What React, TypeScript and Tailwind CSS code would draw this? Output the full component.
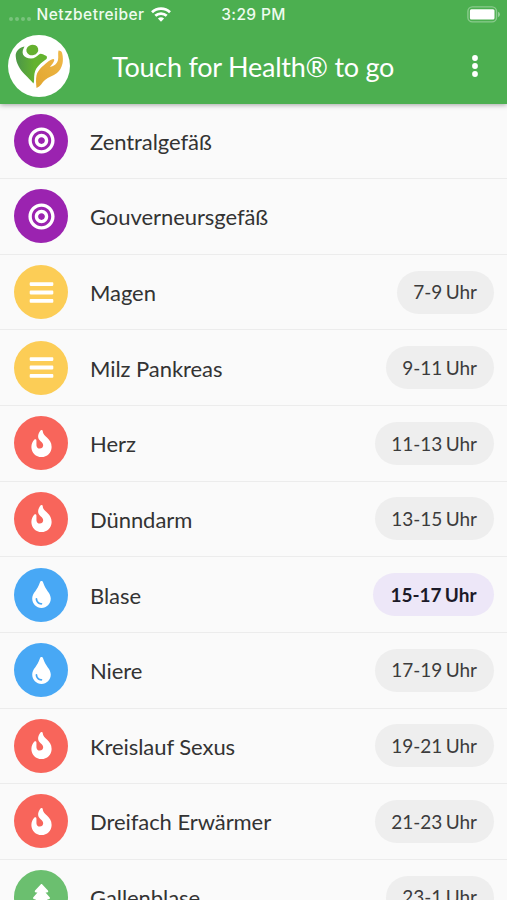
import type { IconType } from "react-icons";
import { FaBars, FaBullseye, FaFire, FaTint, FaTree } from "react-icons/fa";

type Meridian = {
    name: string;
    time?: string;
    icon: IconType;
    color: string;
    active?: boolean;
};

const meridians: Meridian[] = [
    { name: "Zentralgefäß", icon: FaBullseye, color: "bg-[#9b23b0]" },
    { name: "Gouverneursgefäß", icon: FaBullseye, color: "bg-[#9b23b0]" },
    { name: "Magen", time: "7-9 Uhr", icon: FaBars, color: "bg-[#fccd56]" },
    { name: "Milz Pankreas", time: "9-11 Uhr", icon: FaBars, color: "bg-[#fccd56]" },
    { name: "Herz", time: "11-13 Uhr", icon: FaFire, color: "bg-[#f8655b]" },
    { name: "Dünndarm", time: "13-15 Uhr", icon: FaFire, color: "bg-[#f8655b]" },
    { name: "Blase", time: "15-17 Uhr", icon: FaTint, color: "bg-[#48a8f5]", active: true },
    { name: "Niere", time: "17-19 Uhr", icon: FaTint, color: "bg-[#48a8f5]" },
    { name: "Kreislauf Sexus", time: "19-21 Uhr", icon: FaFire, color: "bg-[#f8655b]" },
    { name: "Dreifach Erwärmer", time: "21-23 Uhr", icon: FaFire, color: "bg-[#f8655b]" },
    { name: "Gallenblase", time: "23-1 Uhr", icon: FaTree, color: "bg-[#6bbf6f]" },
];

const StatusBar = () => {
    return (
        <div className="grid h-7 grid-cols-3 items-center pl-[9px] pr-[7px] font-['Inter',sans-serif] text-[15.5px] font-medium text-[#effbef]">
            <div className="flex items-center">
                <div className="mt-2.5 flex gap-[2.5px]">
                    {[0, 1, 2, 3].map((dot) => (
                        <span key={dot} className="size-[3.5px] rounded-full bg-white/25" />
                    ))}
                </div>
                <span className="ml-[6px] mt-px whitespace-nowrap tracking-[0.45px]">Netzbetreiber</span>
                <svg viewBox="0 0 20 15" className="ml-[7px] h-[15px] w-5 shrink-0" fill="none" stroke="white" strokeWidth="2.7">
                    <path d="M1 5.2a13 13 0 0 1 18 0" />
                    <path d="M4.3 8.8a8.3 8.3 0 0 1 11.4 0" />
                    <path d="M10 14.8 6.9 11.6a4.5 4.5 0 0 1 6.2 0z" fill="white" stroke="none" />
                </svg>
            </div>
            <span className="mr-[2px] mt-px text-center tracking-[0.35px]">3:29 PM</span>
            <svg viewBox="0 0 33 17" className="h-[17px] w-[33px] justify-self-end">
                <rect x="0.9" y="0.9" width="28.6" height="15" rx="4.5" fill="none" stroke="white" strokeOpacity="0.35" strokeWidth="1.4" />
                <rect x="2.9" y="3.2" width="24.6" height="10.4" rx="1.5" fill="white" />
                <path d="M31 5.8q2 .8 2 2.7t-2 2.7z" fill="white" fillOpacity="0.4" />
            </svg>
        </div>
    );
};

const Logo = () => {
    return (
        <svg viewBox="0 0 62 62" className="size-[62px] shrink-0">
            <defs>
                <linearGradient id="body" x1="0" y1="0.3" x2="1" y2="0.3">
                    <stop offset="0.1" stopColor="#4f9a45" />
                    <stop offset="0.6" stopColor="#64b32f" />
                </linearGradient>
                <linearGradient id="hand" x1="0" y1="1" x2="1" y2="0">
                    <stop offset="0" stopColor="#e2a62f" />
                    <stop offset="1" stopColor="#efb848" />
                </linearGradient>
            </defs>
            <circle cx="31" cy="31" r="31" fill="white" />
            <path
                d="M16.5 11.5C11 12.5 7.5 16.5 7.7 21c.2 4 1.3 7 2.8 10 3 6.5 9 10.5 15 17.5 1-2.5.3-6.5 1-10 1.500-7 6.500-10.500 12-14.500.8-1.500.6-2.800-.5-3.300-3.500-1.300-5-2.700-7-1.200-2.500 2-4.500 4-8 4-3.500 0-6.500-1.300-8-4-1-3 .2-5.500 1.500-8z"
                fill="url(#body)"
            />
            <ellipse cx="24.3" cy="15" rx="6" ry="5.300" transform="rotate(-15 24.3 15)" fill="#65b02f" />
            <path
                d="M28.5 53c-.4-4.500-.8-8.500 0-12.500 1.500-6 6.500-9.500 10.500-13 2.500-2.300 5-3.500 6.500-3.500 1.500.5.5 2.500-.5 4-1 1.800-2.500 3-3 4 4.500-.8 7-3.500 8-7 .7-3.500-.3-6.500.5-9.500 2 0 3.500 1 3.700 3 .8 3.500 1 7 .3 10-1 4.500-3 7.500-5.500 9.500-4 3-8.500 4-12 7-3 2.500-4.500 6.500-8.500 8z"
                fill="url(#hand)"
            />
        </svg>
    );
};

const Header = () => {
    return (
        <header className="relative h-[103.5px] bg-[#4caf50] shadow-[0_1px_5px_rgba(0,0,0,0.35)]">
            <StatusBar />
            <div className="flex h-[76px] items-center pl-[7.5px] pr-[28.5px]">
                <Logo />
                <h1 className="ml-[42.5px] mt-[2px] flex-1 whitespace-nowrap text-[27px] tracking-[-0.24px] text-white">
                    Touch for Health® to go
                </h1>
                <svg viewBox="0 0 8 24" className="h-6 w-2" fill="white">
                    <circle cx="4" cy="4" r="2.9" />
                    <circle cx="4" cy="12" r="2.9" />
                    <circle cx="4" cy="20" r="2.9" />
                </svg>
            </div>
        </header>
    );
};

const MeridianRow = ({ name, time, icon: Icon, color, active }: Meridian) => {
    return (
        <li className="flex h-[75.63px] shrink-0 items-center border-b border-[#ececec] pl-[14.4px] pr-[13.5px]">
            <div className={`flex size-[54px] items-center justify-center rounded-full ${color}`}>
                <Icon className="size-[27px] text-white" />
            </div>
            <span className="ml-[21.6px] mt-[1px] flex-1 text-[22px] tracking-[-0.06px] text-[#333]">{name}</span>
            {time && (
                <span
                    className={
                        active
                            ? "flex h-[43px] items-center rounded-full bg-[#ede7f8] px-[17px] pt-[1px] text-[19px] font-bold text-[#1c1a28] [word-spacing:-1.5px]"
                            : "flex h-[43px] items-center rounded-full bg-[#eeeeee] px-[16.5px] pt-[1px] text-[19px] text-[#3c3c3c] [word-spacing:-1.5px]"
                    }
                >
                    {time}
                </span>
            )}
        </li>
    );
};

const App = () => {
    return (
        <div className="flex h-[900px] w-[507px] flex-col overflow-hidden bg-[#fafafa] font-['Lato',sans-serif]">
            <Header />
            <ul>
                {meridians.map((meridian) => (
                    <MeridianRow key={meridian.name} {...meridian} />
                ))}
            </ul>
        </div>
    );
};

export default App;
